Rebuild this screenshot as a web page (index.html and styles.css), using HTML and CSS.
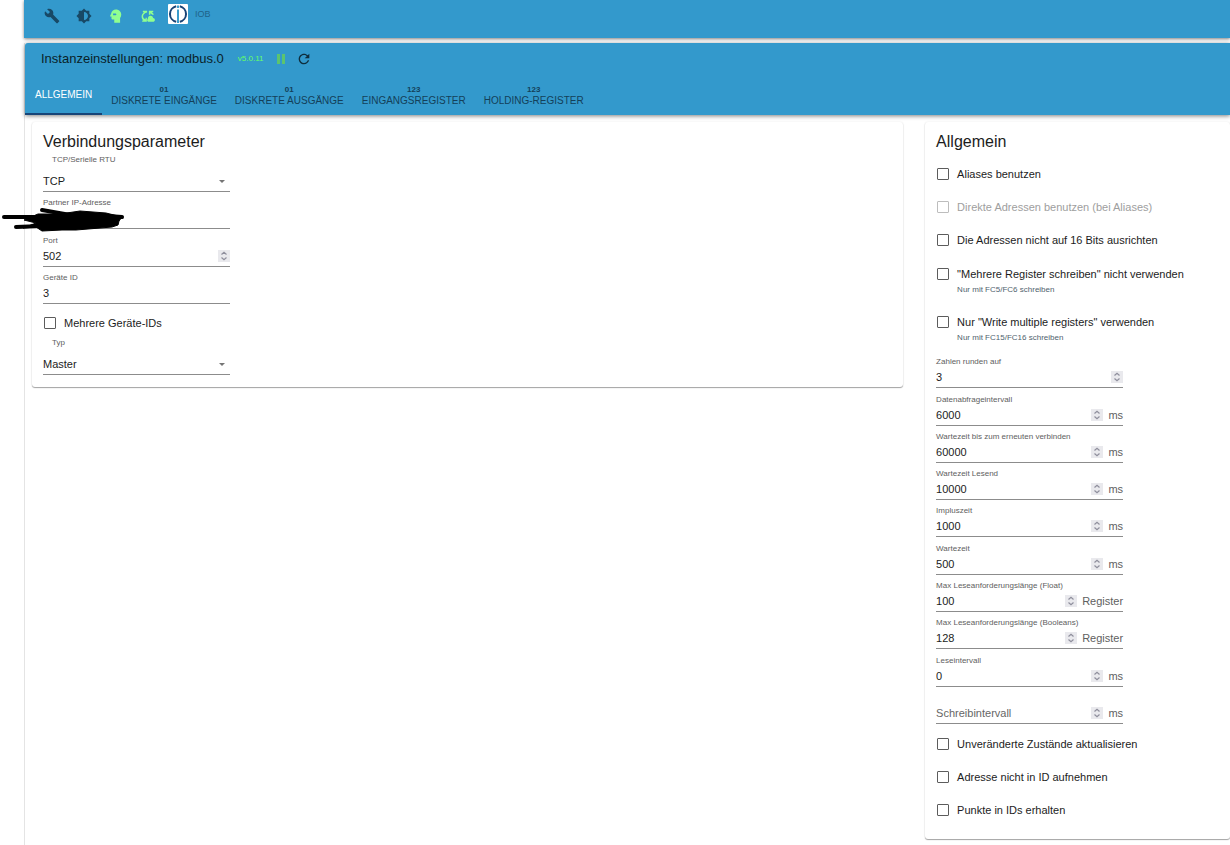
FILE: index.html
```html
<!DOCTYPE html>
<html lang="de">
<head>
<meta charset="utf-8">
<title>Instanzeinstellungen: modbus.0</title>
<link rel="stylesheet" href="styles.css">
</head>
<body>
<svg class="defs" aria-hidden="true">
  <symbol id="spin" viewBox="0 0 12 12"><rect width="12" height="12" fill="#e9e9ed"/><path d="M3.500 4.500 6 2.300l2.500 2.200M3.500 7.500 6 9.700l2.500-2.200" fill="none" stroke="#8f8f9d" stroke-width="1.200"/></symbol>
</svg>
<div class="page">
  <header class="toolbar">
    <button class="tool" aria-label="Einstellungen"><svg viewBox="0 0 24 24"><path d="M22.700 19l-9.100-9.100c.9-2.300.4-5-1.500-6.900-2-2-5-2.400-7.400-1.300L9 6 6 9 1.600 4.700C.4 7.100.9 10.100 2.900 12.100c1.900 1.900 4.600 2.400 6.900 1.500l9.100 9.100c.4.4 1 .4 1.400 0l2.300-2.300c.5-.4.5-1.100.1-1.400z"/></svg></button>
    <button class="tool" aria-label="Farbschema"><svg viewBox="0 0 24 24"><path d="M20 15.310 23.310 12 20 8.690V4h-4.690L12 .69 8.690 4H4v4.690L.69 12 4 15.310V20h4.690L12 23.310 15.310 20H20v-4.690zM12 18V6c3.310 0 6 2.690 6 6s-2.690 6-6 6z"/></svg></button>
    <button class="tool tool-on" aria-label="Expertenmodus"><svg viewBox="0 0 24 24"><path fill-rule="evenodd" d="M12 1C7.500 1 4 4 3.800 7.800L1.800 11.800c-.3.600 0 1.200.7 1.200H4.200V16c0 1.400.9 2.200 2.200 2.200H9V23.500h10v-8c1.300-1.500 2-3.500 2-5.900C21 4.800 17 1 12 1zM7 7.500h4.500l1.500 1.500-1.500 1.500H7z"/></svg></button>
    <button class="tool tool-on" aria-label="Synchronisierung"><svg viewBox="0 0 24 24"><path d="M10.500 3H3.200v2.400h1.900C2.600 7.300 1 9.900 1 12.700c0 2.800 1.200 5.200 3.200 6.800H2V22h8v-7H7.800v2.500C5.200 16.500 3.600 14.800 3.600 12.700c0-3.300 2.700-5.800 6.900-6.700zM13.500 3h7.500v2.300h-2.300c1.600 1.200 2.800 2.800 3.300 4.700h-3c-.6-1.100-1.600-2-3-2.700V10h-2.500zM20.700 15.500c-.5-2.300-2.100-3.800-4.400-3.800-2 0-3.600 1.100-4.200 2.800-.3 3-1.600 3.200-1.600 4.500 0 2 1.200 3 2.800 3h7.200c1.900 0 3.300-1.400 3.300-3.200 0-1.700-1.300-3.200-3.100-3.300z"/></svg></button>
    <svg class="logo" viewBox="0 0 20 20" role="img" aria-label="ioBroker"><rect width="20" height="20" rx="1" fill="#fff"/><path d="M8.200 2.200a8 8 0 0 0 0 15.600M11.800 2.200a8 8 0 0 1 0 15.600" fill="none" stroke="#194476" stroke-width="2"/><path d="M10 5.500V19M10 1.500v2.500" stroke="#3b9ccb" stroke-width="2"/></svg>
    <span class="host">IOB</span>
  </header>

  <main class="panel">
    <div class="appbar">
      <div class="title-row">
        <h1 class="title">Instanzeinstellungen: modbus.0</h1>
        <span class="version">v5.0.11</span>
        <button class="action pause" aria-label="Pause"><svg viewBox="0 0 12 12"><path d="M2 1h3v10H2zM7 1h3v10H7z"/></svg></button>
        <button class="action reload" aria-label="Neu laden"><svg viewBox="3 3 18 18"><path d="M17.650 6.350C16.200 4.900 14.210 4 12 4c-4.420 0-7.990 3.580-7.990 8s3.570 8 7.990 8c3.730 0 6.840-2.550 7.730-6h-2.080c-.82 2.330-3.040 4-5.650 4-3.310 0-6-2.690-6-6s2.690-6 6-6c1.660 0 3.140.69 4.220 1.780L13 11h7V4l-2.350 2.350z"/></svg></button>
      </div>
      <nav class="tabs" role="tablist">
        <button class="tab tab-active" role="tab" aria-selected="true">ALLGEMEIN</button>
        <button class="tab" role="tab"><b class="tab-icon">01</b>DISKRETE EINGÄNGE</button>
        <button class="tab" role="tab"><b class="tab-icon">01</b>DISKRETE AUSGÄNGE</button>
        <button class="tab" role="tab"><b class="tab-icon">123</b>EINGANGSREGISTER</button>
        <button class="tab" role="tab"><b class="tab-icon">123</b>HOLDING-REGISTER</button>
      </nav>
    </div>

    <div class="content">
      <section class="card">
        <h2 class="card-title">Verbindungsparameter</h2>
        <div class="pick">
          <label class="pick-label" for="mode">TCP/Serielle RTU</label>
          <div class="pick-row"><select id="mode" class="pick-input"><option>TCP</option><option>Serielle RTU</option></select></div>
        </div>
        <div class="fields fields-three">
          <div class="field">
            <label class="label" for="ip">Partner IP-Adresse</label>
            <div class="row"><input class="input" id="ip" type="text"></div>
            <svg class="scribble" viewBox="0 0 124 26" aria-hidden="true"><g fill="none" stroke="#000" stroke-width="4" stroke-linecap="round" stroke-linejoin="round"><path d="M4 11h36"/><path d="M16 21 42 20"/><path d="M42 4 76 10"/><path d="M108 10 122 11"/></g><path d="M24 14 38 8 60 8 80 5 106 7 122 11 119 15 118 19 112 21 76 24 62 24 42 25 36 21 23 22 36 17z" stroke="#000" stroke-width="1" stroke-linejoin="round"/></svg>
          </div>
          <div class="field">
            <label class="label" for="port">Port</label>
            <div class="row"><input class="input" id="port" type="number" value="502"><svg class="spin"><use href="#spin"/></svg></div>
          </div>
          <div class="field">
            <label class="label" for="dev">Geräte ID</label>
            <div class="row"><input class="input" id="dev" type="text" value="3"></div>
          </div>
        </div>
        <label class="check check-single"><input class="box" type="checkbox">Mehrere Geräte-IDs</label>
        <div class="pick">
          <label class="pick-label" for="kind">Typ</label>
          <div class="pick-row"><select id="kind" class="pick-input"><option>Master</option><option>Slave</option></select></div>
        </div>
      </section>

      <section class="card">
        <h2 class="card-title">Allgemein</h2>
        <div class="checks">
          <label class="check"><input class="box" type="checkbox">Aliases benutzen</label>
          <label class="check check-off"><input class="box" type="checkbox" disabled>Direkte Adressen benutzen (bei Aliases)</label>
          <label class="check"><input class="box" type="checkbox">Die Adressen nicht auf 16 Bits ausrichten</label>
        </div>
        <div class="helped-list">
          <div class="helped">
            <label class="check"><input class="box" type="checkbox" aria-describedby="h1">"Mehrere Register schreiben" nicht verwenden</label>
            <p class="help" id="h1">Nur mit FC5/FC6 schreiben</p>
          </div>
          <div class="helped">
            <label class="check"><input class="box" type="checkbox" aria-describedby="h2">Nur "Write multiple registers" verwenden</label>
            <p class="help" id="h2">Nur mit FC15/FC16 schreiben</p>
          </div>
        </div>
        <div class="fields fields-ten">
          <div class="field"><label class="label" for="f1">Zahlen runden auf</label><div class="row"><input class="input" id="f1" type="number" value="3"><svg class="spin"><use href="#spin"/></svg></div></div>
          <div class="field"><label class="label" for="f2">Datenabfrageintervall</label><div class="row"><input class="input" id="f2" type="number" value="6000"><svg class="spin"><use href="#spin"/></svg><span class="unit">ms</span></div></div>
          <div class="field"><label class="label" for="f3">Wartezeit bis zum erneuten verbinden</label><div class="row"><input class="input" id="f3" type="number" value="60000"><svg class="spin"><use href="#spin"/></svg><span class="unit">ms</span></div></div>
          <div class="field"><label class="label" for="f4">Wartezeit Lesend</label><div class="row"><input class="input" id="f4" type="number" value="10000"><svg class="spin"><use href="#spin"/></svg><span class="unit">ms</span></div></div>
          <div class="field"><label class="label" for="f5">Impluszeit</label><div class="row"><input class="input" id="f5" type="number" value="1000"><svg class="spin"><use href="#spin"/></svg><span class="unit">ms</span></div></div>
          <div class="field"><label class="label" for="f6">Wartezeit</label><div class="row"><input class="input" id="f6" type="number" value="500"><svg class="spin"><use href="#spin"/></svg><span class="unit">ms</span></div></div>
          <div class="field"><label class="label" for="f7">Max Leseanforderungslänge (Float)</label><div class="row"><input class="input" id="f7" type="number" value="100"><svg class="spin"><use href="#spin"/></svg><span class="unit">Register</span></div></div>
          <div class="field"><label class="label" for="f8">Max Leseanforderungslänge (Booleans)</label><div class="row"><input class="input" id="f8" type="number" value="128"><svg class="spin"><use href="#spin"/></svg><span class="unit">Register</span></div></div>
          <div class="field"><label class="label" for="f9">Leseintervall</label><div class="row"><input class="input" id="f9" type="number" value="0"><svg class="spin"><use href="#spin"/></svg><span class="unit">ms</span></div></div>
          <div class="field"><div class="row"><input class="input" id="f10" type="number" placeholder="Schreibintervall" aria-label="Schreibintervall"><svg class="spin"><use href="#spin"/></svg><span class="unit">ms</span></div></div>
        </div>
        <div class="checks">
          <label class="check"><input class="box" type="checkbox">Unveränderte Zustände aktualisieren</label>
          <label class="check"><input class="box" type="checkbox">Adresse nicht in ID aufnehmen</label>
          <label class="check"><input class="box" type="checkbox">Punkte in IDs erhalten</label>
        </div>
      </section>
    </div>
  </main>
</div>
</body>
</html>
```
FILE: styles.css
```css
* { box-sizing: border-box; }

body {
  margin: 0;
  background: #fff;
  color: #1c1c1c;
  font: 11px/14px "Liberation Sans", Arial, sans-serif;
}

button, input, select { font: inherit; color: inherit; }
button { border: 0; padding: 0; background: none; cursor: pointer; }
h1, h2, p { margin: 0; font-weight: 400; }

.defs { position: absolute; width: 0; height: 0; }

.page {
  display: flex;
  flex-direction: column;
  gap: 5px;
  min-height: 100vh;
  margin-left: 24px;
}

/* Toolbar */
.toolbar {
  display: flex;
  align-items: center;
  height: 38px;
  padding: 0 0 10px 12px;
  background: #39c;
  box-shadow: 0 1px 3px rgba(0, 0, 0, .5);
}

.tool {
  display: flex;
  justify-content: center;
  align-items: center;
  width: 32px;
  height: 24px;
  padding-top: 4px;
}
.tool svg { width: 16px; height: 16px; fill: #184966; }
.tool-on svg { width: 14px; height: 14px; fill: #90ff90; }
.logo { width: 20px; height: 20px; margin-left: 4px; }
.host { margin-left: 7px; font-size: 9px; color: #1f6389; }

/* Instance panel */
.panel {
  flex: 1;
  border-left: 1px solid #e4e4e4;
}

.appbar {
  border-radius: 3px 0 0 0;
  background: #39c;
  box-shadow: 0 1px 4px rgba(0, 0, 0, .5);
}

.title-row {
  display: flex;
  align-items: center;
  height: 32px;
  padding-left: 16px;
}
.title { font-size: 13px; line-height: 16px; color: #0a1f29; }
.version { margin-left: 14px; font-size: 8px; color: #6f6; }
.action { display: flex; margin-left: 11px; }
.action svg { width: 12px; height: 12px; }
.pause svg { fill: #5cc46e; }
.reload svg { fill: #0f2e3d; }

.tabs { display: flex; height: 40px; }
.tab {
  display: flex;
  flex-direction: column;
  align-items: center;
  justify-content: center;
  padding: 3px 9px 0;
  border-bottom: 2px solid transparent;
  font-size: 10px;
  line-height: 12px;
  color: #144059;
}
.tab-active { padding: 1px 10px 0; border-color: #164477; color: #fff; }
.tab-icon { font-size: 8px; line-height: 10px; }

/* Cards */
.content {
  display: grid;
  grid-template-columns: minmax(0, 20fr) minmax(0, 7fr);
  align-items: start;
  gap: 22px;
  padding: 7px 0 8px 7px;
}
.card {
  padding: 10px 11px 12px;
  border-radius: 3px;
  box-shadow: 0 1px 1px rgba(0, 0, 0, .35), 0 0 2px rgba(0, 0, 0, .1);
}
.card-title { font-size: 16px; line-height: 20px; }
.card-title + .pick { margin-top: 3px; }
.card-title + .checks { margin-top: 5px; }

/* Fields */
.fields {
  display: grid;
  grid-template-columns: minmax(0, 1fr);
  grid-auto-rows: 1fr;
  width: 187px;
}
.fields-three { min-height: 112px; }
.fields-ten { min-height: 373px; }

.field {
  position: relative;
  display: flex;
  flex-direction: column;
  justify-content: flex-end;
}
.label, .pick-label, .help { font-size: 8px; line-height: 10px; color: #606060; }
.row {
  display: flex;
  align-items: center;
  height: 21px;
  border-bottom: 1px solid #8c8c8c;
}
.input {
  flex: 1;
  min-width: 0;
  height: 20px;
  padding: 0;
  border: 0;
  outline: 0;
  background: none;
  appearance: textfield;
}
.input::-webkit-inner-spin-button { appearance: none; margin: 0; }
.input::placeholder { color: #666; }
.spin { width: 12px; height: 12px; }
.unit { margin-left: 5px; color: #606060; }

.scribble {
  position: absolute;
  left: -43px;
  bottom: -3px;
  width: 124px;
  height: 26px;
}

/* Drop-downs */
.pick { width: 187px; }
.pick-label { display: block; padding: 0 9px; }
.pick-row {
  display: flex;
  height: 27px;
  padding-top: 6px;
  border-bottom: 1px solid #8c8c8c;
}
.pick-row::after {
  content: "";
  align-self: center;
  margin: 0 5px 0 -12px;
  border: 3px solid transparent;
  border-top-color: #757575;
  border-bottom: 0;
  pointer-events: none;
}
.pick-input {
  flex: 1;
  padding: 0;
  border: 0;
  outline: 0;
  background: none;
  appearance: none;
}

/* Checkboxes */
.checks { display: grid; grid-auto-rows: 1fr; min-height: 100px; }
.fields + .checks { margin-top: 3px; }
.check { display: flex; align-items: center; gap: 8px; }
.check-off { color: #9e9e9e; }
.check-single { height: 34px; padding-top: 3px; }
.box {
  appearance: none;
  width: 12px;
  height: 12px;
  margin: 0 0 0 1px;
  border: 1px solid #5c5c5c;
  border-radius: 1px;
}
.box:disabled { border-color: #bdbdbd; }
.box:checked { background: #39c; }

.helped-list { display: grid; gap: 15px; padding: 10px 0 3px; }
.help { padding: 4px 0 5px 21px; color: #4f5f6e; }
```
